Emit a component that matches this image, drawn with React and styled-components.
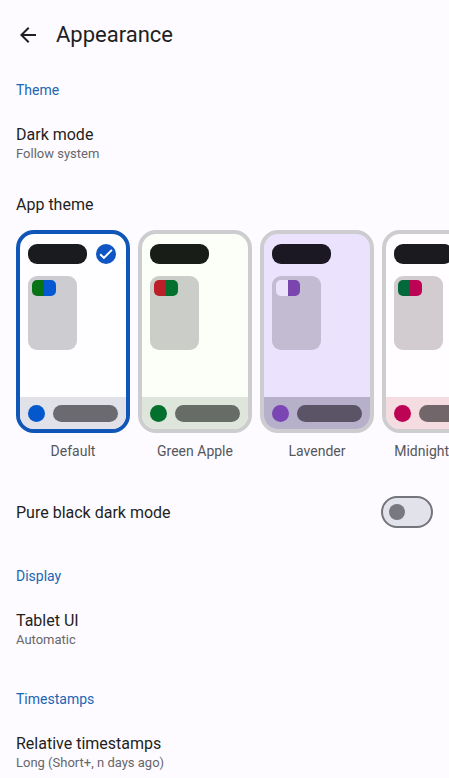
import React, { useState } from "react";
import styled, { createGlobalStyle } from "styled-components";

const GlobalStyle = createGlobalStyle`
    * {
        box-sizing: border-box;
    }
    html {
        background: #fdfbff;
        scrollbar-width: none;
    }
    body {
        margin: 0;
        color: #1f1f22;
        font-family: Roboto, "Noto Sans", sans-serif;
        font-size: 16px;
    }
    button {
        font: inherit;
        color: inherit;
        background: none;
        border: none;
    }
`
const Header = styled.header`
    display: flex;
    align-items: center;
    gap: 16px;
    padding: 20px 16px 5px;
`
const BackButton = styled.button`
    display: flex;
    width: 24px;
    height: 24px;
    padding: 0;
    cursor: pointer;
`
const Title = styled.h1`
    margin: 0;
    font-size: 22px;
    font-weight: 400;
    line-height: 30px;
`
const SectionTitle = styled.h2`
    margin: 0;
    padding: 25px 16px 8px;
    color: #1a66b4;
    font-size: 14px;
    font-weight: 400;
    line-height: 20px;
`
const Row = styled.button`
    display: block;
    width: 100%;
    padding: 16px;
    text-align: left;
    cursor: pointer;
`
const RowTitle = styled.span`
    display: block;
    line-height: 22px;
`
const RowValue = styled.span`
    display: block;
    color: #66666b;
    font-size: 13px;
    line-height: 16px;
`
const ThemeGroup = styled.fieldset`
    min-width: 0;
    margin: 0;
    padding: 16px 0 22px;
    border: none;

    legend {
        float: left;
        width: 100%;
        padding: 0 16px 14px;
        line-height: 22px;
    }
`
const ThemeList = styled.div`
    clear: both;
    display: flex;
    gap: 8px;
    padding: 0 16px;
    overflow-x: auto;
    scrollbar-width: none;
`
const ThemeItem = styled.label`
    flex: none;
    width: 114px;
    cursor: pointer;
`
const HiddenRadio = styled.input`
    position: absolute;
    opacity: 0;
    pointer-events: none;
`
const Preview = styled.div`
    display: flex;
    flex-direction: column;
    height: 203px;
    border: 4px solid ${prop => prop.$selected ? "#0f56b8" : "#cdcccf"};
    border-radius: 18px;
    background: ${prop => prop.$bg};
    overflow: hidden;
`
const PreviewTop = styled.div`
    display: flex;
    align-items: center;
    justify-content: space-between;
    height: 40px;
    padding: 0 10px 0 8px;
`
const PreviewTitle = styled.div`
    width: 59px;
    height: 20px;
    border-radius: 9px;
    background: ${prop => prop.$color};
`
const Cover = styled.div`
    width: 49px;
    height: 74px;
    margin: 2px 8px;
    padding: 4px;
    border-radius: 9px;
    background: ${prop => prop.$color};
`
const Badge = styled.div`
    display: flex;
    width: 24px;
    height: 16px;
    border-radius: 5px;
    overflow: hidden;
`
const BadgeHalf = styled.span`
    flex: 1;
    background: ${prop => prop.$color};
`
const NavBar = styled.div`
    display: flex;
    align-items: center;
    gap: 8px;
    height: 32px;
    margin-top: auto;
    padding: 0 8px;
    background: ${prop => prop.$color};
`
const NavDot = styled.span`
    width: 17px;
    height: 17px;
    border-radius: 50%;
    background: ${prop => prop.$color};
`
const NavPill = styled.span`
    flex: 1;
    height: 17px;
    border-radius: 9px;
    background: ${prop => prop.$color};
`
const ThemeName = styled.span`
    display: block;
    margin-top: 8px;
    color: #56565a;
    font-size: 14px;
    line-height: 20px;
    text-align: center;
    white-space: nowrap;
`
const SwitchRow = styled.label`
    display: flex;
    align-items: center;
    justify-content: space-between;
    min-height: 58px;
    padding: 0 16px;
    cursor: pointer;
`
const Switch = styled.input`
    appearance: none;
    display: flex;
    align-items: center;
    width: 52px;
    height: 32px;
    margin: 0;
    padding: 0 6px;
    border: 2px solid #75767b;
    border-radius: 16px;
    background: #e1e2ea;
    cursor: pointer;

    &:before {
        content: "";
        width: 16px;
        height: 16px;
        border-radius: 50%;
        background: #777880;
    }
    &:checked {
        justify-content: flex-end;
        border-color: #0f56b8;
        background: #0f56b8;
    }
    &:checked:before {
        background: #fff;
    }
`

const themes = [
    {
        name: "Default",
        bg: "#fefdff",
        title: "#1a1b1e",
        cover: "#cdccd1",
        left: "#077315",
        right: "#0458d2",
        nav: "#e1e1e9",
        accent: "#0458cc",
        pill: "#6b6a70",
    },
    {
        name: "Green Apple",
        bg: "#fcfff8",
        title: "#191d18",
        cover: "#cbcec8",
        left: "#bb1f28",
        right: "#04702d",
        nav: "#dee6dc",
        accent: "#04702d",
        pill: "#676d66",
    },
    {
        name: "Lavender",
        bg: "#ebe3fd",
        title: "#1b1824",
        cover: "#c3bbd1",
        left: "#ebe3fb",
        right: "#7946ad",
        nav: "#b7b0cb",
        accent: "#7b46b4",
        pill: "#5a5466",
    },
    {
        name: "Midnight Dusk",
        bg: "#fffdff",
        title: "#1b1a1e",
        cover: "#d2cbd0",
        left: "#04693a",
        right: "#bd0454",
        nav: "#f4dce1",
        accent: "#bd0454",
        pill: "#716669",
    },
];

const BackIcon = () => (
    <svg width="24" height="24" viewBox="0 0 24 24" fill="#1f1f22" aria-hidden="true">
        <path d="M20 11H7.83l5.59-5.59L12 4l-8 8 8 8 1.41-1.41L7.83 13H20v-2z"/>
    </svg>
)

const CheckIcon = () => (
    <svg width="20" height="20" viewBox="0 0 20 20" aria-hidden="true">
        <circle cx="10" cy="10" r="10" fill="#0f56c4"/>
        <path d="M4.2 10.2l3.7 3.7 8-8" fill="none" stroke="#fff" strokeWidth="2"/>
    </svg>
)

const ThemeOption = ({ theme, selected, onSelect }) => (
    <ThemeItem>
        <HiddenRadio type="radio" name="theme" checked={selected} onChange={onSelect}/>
        <Preview $bg={theme.bg} $selected={selected}>
            <PreviewTop>
                <PreviewTitle $color={theme.title}/>
                {selected && <CheckIcon/>}
            </PreviewTop>
            <Cover $color={theme.cover}>
                <Badge>
                    <BadgeHalf $color={theme.left}/>
                    <BadgeHalf $color={theme.right}/>
                </Badge>
            </Cover>
            <NavBar $color={theme.nav}>
                <NavDot $color={theme.accent}/>
                <NavPill $color={theme.pill}/>
            </NavBar>
        </Preview>
        <ThemeName>{theme.name}</ThemeName>
    </ThemeItem>
)

const Preference = ({ title, value }) => (
    <Row type="button">
        <RowTitle>{title}</RowTitle>
        <RowValue>{value}</RowValue>
    </Row>
)

const App = () => {
    const [theme, setTheme] = useState("Default");
    const [pureBlack, setPureBlack] = useState(false);

    return (
        <>
            <GlobalStyle/>
            <Header>
                <BackButton type="button" aria-label="Back"><BackIcon/></BackButton>
                <Title>Appearance</Title>
            </Header>
            <main>
                <SectionTitle>Theme</SectionTitle>
                <Preference title="Dark mode" value="Follow system"/>
                <ThemeGroup>
                    <legend>App theme</legend>
                    <ThemeList>
                        {themes.map(item => (
                            <ThemeOption
                                key={item.name}
                                theme={item}
                                selected={item.name === theme}
                                onSelect={() => setTheme(item.name)}
                            />
                        ))}
                    </ThemeList>
                </ThemeGroup>
                <SwitchRow>
                    <span>Pure black dark mode</span>
                    <Switch
                        type="checkbox"
                        role="switch"
                        checked={pureBlack}
                        onChange={e => setPureBlack(e.target.checked)}
                    />
                </SwitchRow>
                <SectionTitle>Display</SectionTitle>
                <Preference title="Tablet UI" value="Automatic"/>
                <SectionTitle>Timestamps</SectionTitle>
                <Preference title="Relative timestamps" value="Long (Short+, n days ago)"/>
            </main>
        </>
    )
}

export default App;
